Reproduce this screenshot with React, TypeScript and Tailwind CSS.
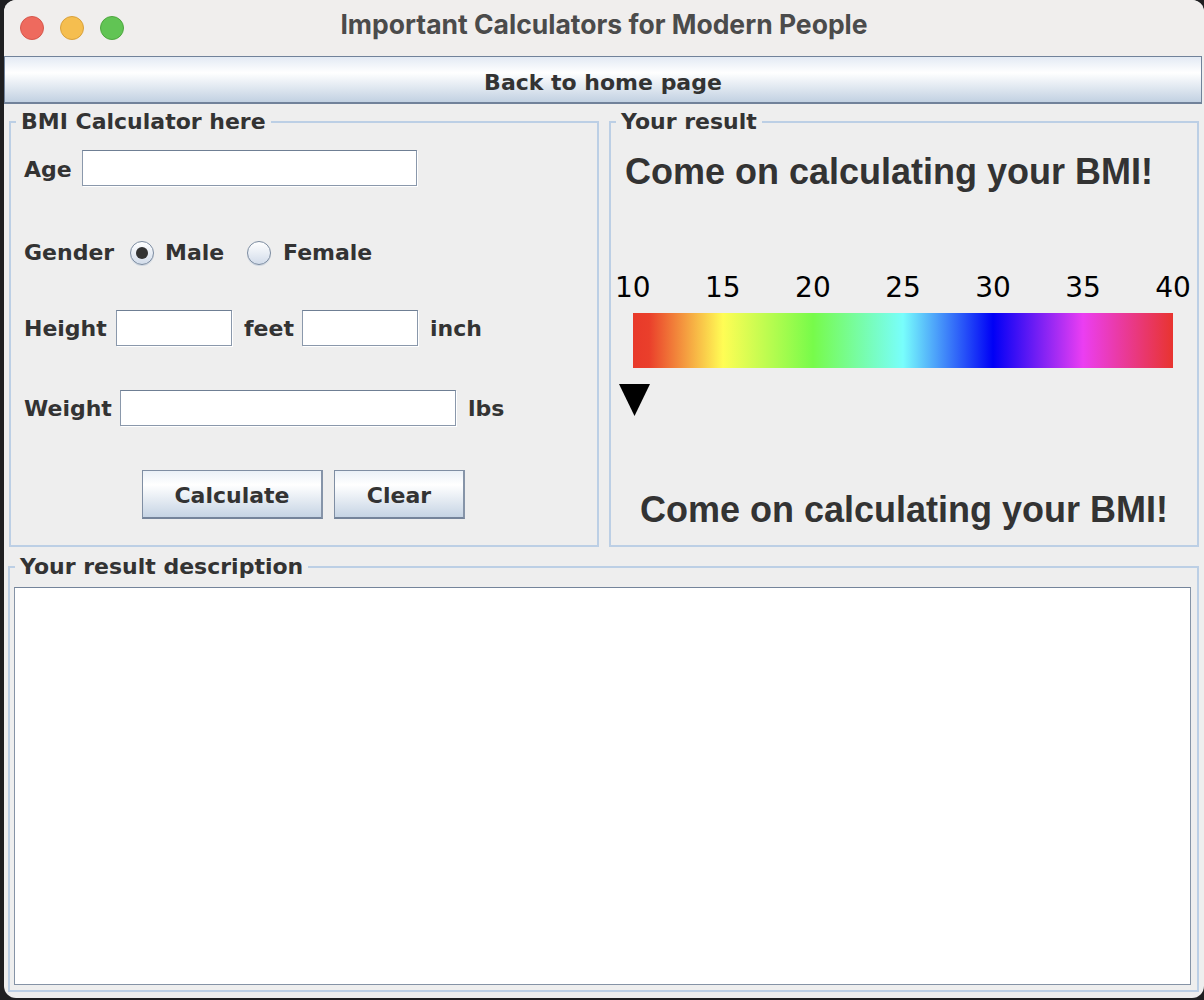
import React from "react";

const LBL = "font-['DejaVu_Sans',sans-serif] font-bold text-[22px] text-[#333333] leading-[26px] whitespace-nowrap";

function Field({ className }: { className: string }) {
  return (
    <input
      readOnly
      className={`${className} h-[36px] bg-white border border-[#8a98ab] border-t-[#6f7f94] shadow-[1px_1px_0_#ffffff] outline-none`}
    />
  );
}

function Radio({ checked }: { checked: boolean }) {
  return (
    <span className="w-[24px] h-[24px] shrink-0 rounded-full border border-[#7b8ba0] bg-[linear-gradient(to_bottom,#ffffff,#d2dcea)] flex items-center justify-center shadow-[0_1px_0_#d0d8e2]">
      {checked && <span className="w-[12px] h-[12px] rounded-full bg-[#333333]" />}
    </span>
  );
}

function Panel({ title, className, children }: { title: string; className: string; children?: React.ReactNode }) {
  return (
    <fieldset className={`border-2 border-[#bccfe5] min-w-0 ${className}`}>
      <legend className={`ml-[5px] px-[5px] ${LBL}`}>{title}</legend>
      {children}
    </fieldset>
  );
}

const BTN =
  "h-[49px] border border-[#7f8ea3] border-b-2 border-b-[#75849a] border-r-2 border-r-[#8694a8] bg-[linear-gradient(to_bottom,#eaf0f7,#ffffff_30%,#c6d4e4)] font-['DejaVu_Sans',sans-serif] font-bold text-[22px] text-[#333333] pt-[2px]";

export default function App() {
  return (
    <div className="w-[1204px] h-[1000px] bg-[#1f1f21] flex pl-[4px] overflow-hidden">
      <div className="w-[1200px] h-[998px] rounded-[12px] overflow-hidden bg-[#eeeeee] flex flex-col">
        {/* title bar */}
        <div className="h-[56px] shrink-0 bg-[#f0eeed] grid grid-cols-[1fr_auto_1fr] items-center">
          <div className="flex gap-[16px] pl-[16px]">
            <span className="w-[24px] h-[24px] rounded-full bg-[#ee6a5e] border border-[#d6574c]" />
            <span className="w-[24px] h-[24px] rounded-full bg-[#f5be4f] border border-[#d9a13c]" />
            <span className="w-[24px] h-[24px] rounded-full bg-[#61c454] border border-[#4ea73f]" />
          </div>
          <div className="font-['Inter',sans-serif] font-bold text-[26.5px] text-[#4b4b4b] pb-[7px] whitespace-nowrap">
            Important Calculators for Modern People
          </div>
          <div />
        </div>

        {/* back button */}
        <button className="h-[48px] w-[1198px] shrink-0 border border-[#71829a] border-b-2 bg-[linear-gradient(to_bottom,#e3eaf4,#ffffff_35%,#c2d1e2)] font-['DejaVu_Sans',sans-serif] font-bold text-[22px] text-[#333333] pt-[5px]">
          Back to home page
        </button>

        {/* top row */}
        <div className="flex gap-[10px] pl-[5px] pt-[5px] h-[443px] shrink-0">
          <Panel title="BMI Calculator here" className="w-[590px] h-[438px]">
            <div className="flex flex-col pl-[13px]">
              <div className="flex items-center mt-[15px] h-[36px]">
                <span className={`${LBL} w-[58px] pt-[3px]`}>Age</span>
                <Field className="w-[335px]" />
              </div>
              <div className="flex items-center mt-[49px] h-[36px]">
                <span className={`${LBL} w-[106px]`}>Gender</span>
                <Radio checked />
                <span className={`${LBL} ml-[11px] w-[82px]`}>Male</span>
                <Radio checked={false} />
                <span className={`${LBL} ml-[12px]`}>Female</span>
              </div>
              <div className="flex items-center mt-[39px] h-[36px]">
                <span className={`${LBL} w-[92px] pt-[2px]`}>Height</span>
                <Field className="w-[116px]" />
                <span className={`${LBL} ml-[12px] w-[58px] pt-[2px]`}>feet</span>
                <Field className="w-[116px]" />
                <span className={`${LBL} ml-[12px] pt-[2px]`}>inch</span>
              </div>
              <div className="flex items-center mt-[44px] h-[36px]">
                <span className={`${LBL} w-[96px] pt-[2px]`}>Weight</span>
                <Field className="w-[336px]" />
                <span className={`${LBL} ml-[12px] pt-[2px]`}>lbs</span>
              </div>
              <div className="flex mt-[44px] pl-[118px] gap-[11px]">
                <button className={`${BTN} w-[181px]`}>Calculate</button>
                <button className={`${BTN} w-[131px]`}>Clear</button>
              </div>
            </div>
          </Panel>

          <Panel title="Your result" className="w-[590px] h-[438px]">
            <div className="flex flex-col">
              <div className="mt-[16px] pl-[14px] font-['Liberation_Sans',Arial,sans-serif] font-bold text-[36px] leading-[42px] text-[#333333] whitespace-nowrap">
                Come on calculating your BMI!
              </div>
              <div className="mt-[78px] ml-[4px] w-[576px] flex justify-between font-['DejaVu_Sans',sans-serif] text-[28px] leading-[34px] text-black">
                <span>10</span>
                <span>15</span>
                <span>20</span>
                <span>25</span>
                <span>30</span>
                <span>35</span>
                <span>40</span>
              </div>
              <div className="mt-[8px] ml-[22px] w-[540px] h-[55px] bg-[linear-gradient(to_right,#e8392a_0%,#ea3f2b_3%,#fffd55_16.67%,#77fb4a_33.33%,#78fefc_50%,#0000f6_66.67%,#eb3ef2_83.33%,#e8342f_100%)]" />
              <svg className="mt-[16px] ml-[8px]" width="31" height="32" viewBox="0 0 31 32">
                <polygon points="0,0 31,0 15.5,32" fill="#000000" />
              </svg>
              <div className="mt-[73px] text-center font-['Liberation_Sans',Arial,sans-serif] font-bold text-[36px] leading-[42px] text-[#333333] whitespace-nowrap">
                Come on calculating your BMI!
              </div>
            </div>
          </Panel>
        </div>

        {/* bottom */}
        <div className="pl-[4px] pt-[7px]">
          <Panel title="Your result description" className="w-[1191px] h-[438px]">
            <textarea
              readOnly
              className="block ml-[4px] mt-[7px] w-[1177px] h-[398px] bg-white border border-[#8593a6] border-t-[#74849a] resize-none outline-none"
            />
          </Panel>
        </div>
      </div>
    </div>
  );
}
